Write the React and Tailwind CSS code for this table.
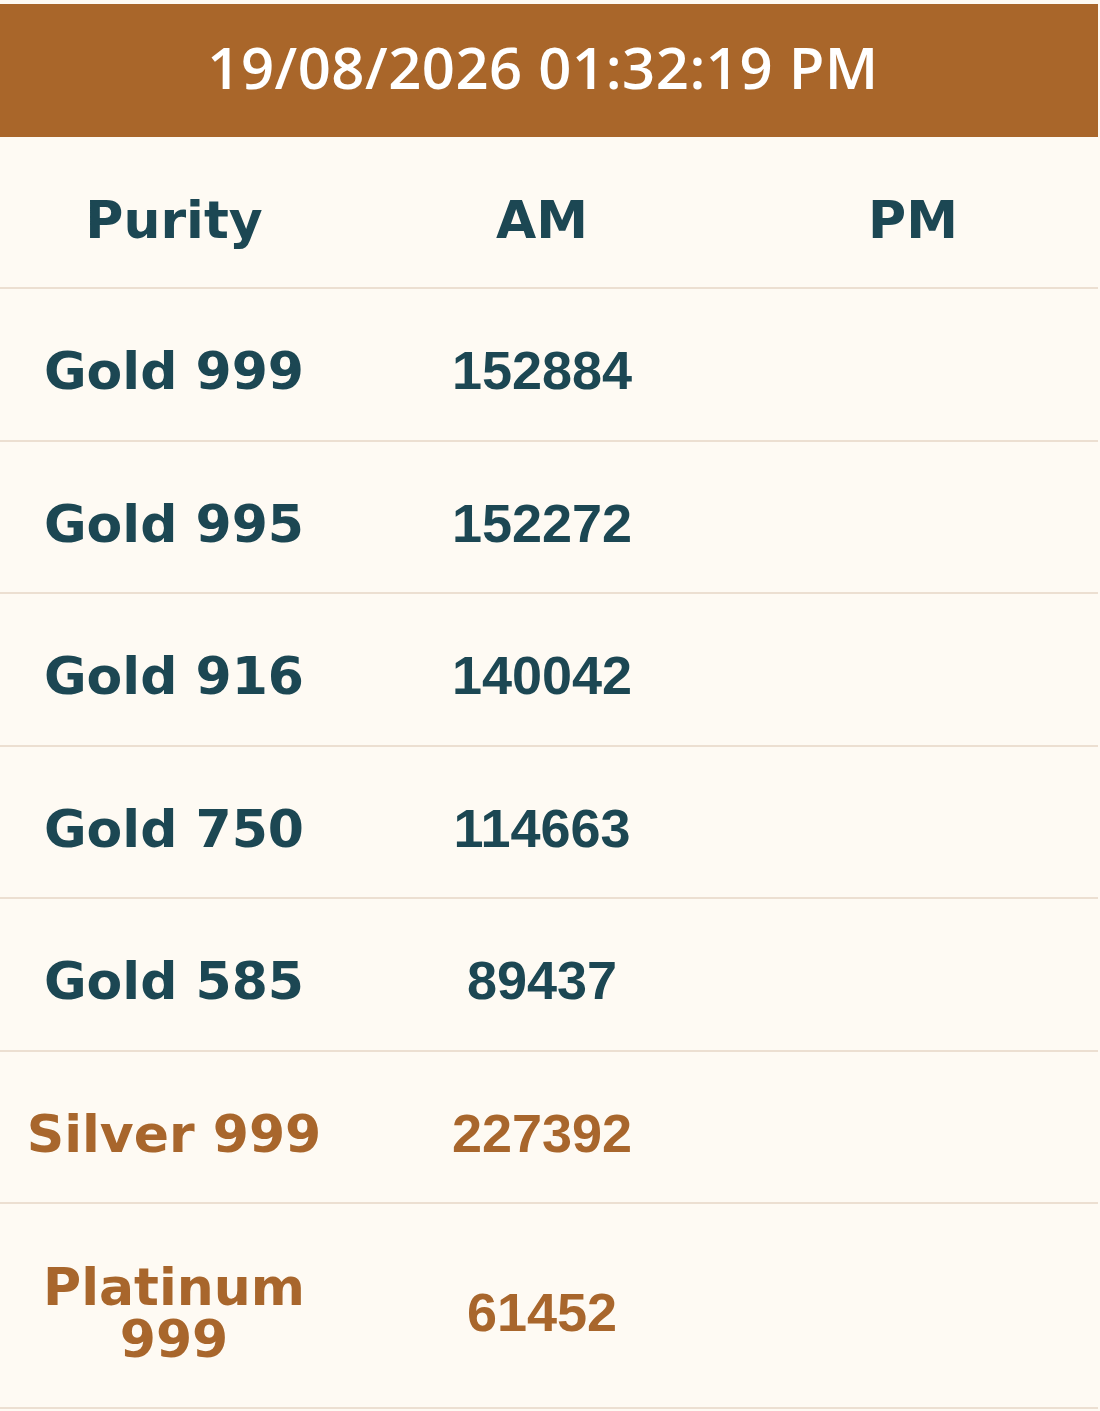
import React from 'react';

const rows = [
  {name: 'Gold 999', am: '152884'},
  {name: 'Gold 995', am: '152272'},
  {name: 'Gold 916', am: '140042'},
  {name: 'Gold 750', am: '114663'},
  {name: 'Gold 585', am: '89437'},
  {name: 'Silver 999', am: '227392', brown: true},
  {name: 'Platinum 999', am: '61452', brown: true, tall: true},
];

const label = "font-['DejaVu_Sans',sans-serif] font-bold text-[52px] leading-[52px]";
const num = "font-['Liberation_Sans',Arial,sans-serif] font-bold text-[54px] leading-none";

const App = () => {
  return (
    <div className="min-h-[1411px] w-[1100px] bg-[#fefaf3] pt-1">
      <div className="w-[1098px]">
        <div className="h-[133px] bg-[#a9662a] flex items-center justify-center">
          <span className="font-['Open_Sans',sans-serif] font-semibold text-[58px] text-white tracking-[0.5px] pb-2 pr-3">
            19/08/2026 01:32:19 PM
          </span>
        </div>

        <div className="grid grid-cols-[348px_388px_362px] h-[152px] items-center text-[#1c4753] border-b-2 border-[#ecdfd1]">
          <div className={`${label} text-center pt-4`}>Purity</div>
          <div className={`${label} text-center pt-4`}>AM</div>
          <div className={`${label} text-center pt-4 pr-2`}>PM</div>
        </div>

        {rows.map((r) => (
          <div
            key={r.name}
            className={`grid grid-cols-[348px_388px_362px] items-center border-b-2 border-[#ecdfd1] ${r.tall ? 'h-[205px]' : 'h-[152.5px]'} ${r.brown ? 'text-[#a8662c]' : 'text-[#1c4753]'}`}>
            <div className={`${label} text-center ${r.tall ? 'px-10 pt-[14px]' : 'pt-[14px]'}`}>{r.name}</div>
            <div className={`${num} text-center pt-[12px]`}>{r.am}</div>
            <div></div>
          </div>
        ))}
      </div>
    </div>
  );
};

export default App;
